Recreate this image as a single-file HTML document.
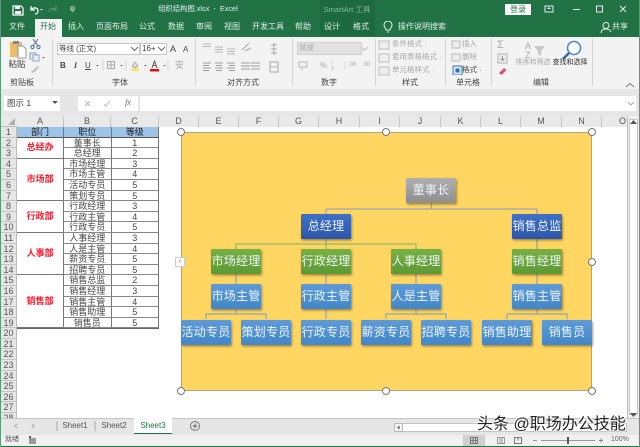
<!DOCTYPE html>
<html lang="zh"><head><meta charset="utf-8"><title>Excel</title>
<style>
html,body{margin:0;padding:0;background:#fff}
#p{position:relative;width:640px;height:447px;overflow:hidden;background:#fff;font-family:"Liberation Sans","Noto Sans CJK SC",sans-serif;font-size:8px;color:#444;filter:blur(.35px)}
#p div,#p span,#p svg{position:absolute}
.t{white-space:nowrap;line-height:10px;transform:translateX(-50%)}
.l{white-space:nowrap;line-height:10px}
.g{color:#a8a8a8}
.w{color:#e4eee8}
.sep{width:1px;background:#d4d4d4;top:39px;height:47px}
.bx{background:#fff;border:1px solid #c8c8c8;box-sizing:border-box}
.ch{top:116px;height:11px;line-height:11px;text-align:center;color:#555;font-size:9px;border-right:1px solid #c4c4c4;box-sizing:border-box;background:#e9e9e9}
#rh{left:1px;top:127px;width:16px;display:grid;grid-template-rows:repeat(28,10.6px);background:#e6e6e6}
#rh i{font-style:normal;text-align:center;font-size:9px;line-height:11px;color:#555;border-bottom:1px solid #c4c4c4;border-right:1px solid #bbb;box-sizing:border-box;overflow:hidden}
#tb{left:17px;top:127px;width:142px;display:grid;grid-template-columns:47px 47.5px 47.5px;grid-template-rows:repeat(19,10.6px);border-bottom:1px solid #666;border-right:1px solid #666;box-sizing:border-box}
#tb b{font-weight:normal;font-size:9px;line-height:11px;text-align:center;color:#444;border-bottom:1px solid #888;border-right:1px solid #777;box-sizing:border-box;overflow:hidden;white-space:nowrap}
#tb b.h{background:#9dc3e6;color:#1a1a1a;border-bottom:1px solid #555}
#tb b.m{color:#ff1a2e;font-weight:bold;display:flex;align-items:center;justify-content:center;border-bottom:1px solid #777}
.n{width:50px;height:25px;line-height:24px;text-align:center;color:#eef4fa;font-size:12px;letter-spacing:.2px;box-shadow:1px 1.5px 2px rgba(70,60,30,.5);border-radius:1px;white-space:nowrap}
.c{background:linear-gradient(#5e9ad8,#4287c9)}
.gr{background:linear-gradient(#78b043,#5c9a35)}
.d{background:linear-gradient(#3f70c8,#2c56ab)}
.s{background:linear-gradient(#b0b0b0,#8e8e8e)}
.hd{border:1px solid #777;border-radius:50%;background:#fff;box-sizing:border-box;width:8px;height:8px}
</style></head><body><div id="p">

<!-- title + tab bar -->
<div style="left:0;top:0;width:640px;height:37px;background:#217346"></div>
<div style="left:320px;top:0;width:55px;height:36px;background:#1d6a40"></div>
<svg style="left:0;top:0" width="90" height="18" viewBox="0 0 90 18"><path d="M13 6h8l2 2v7h-10z" fill="none" stroke="#fff" stroke-width="1.2"/><rect x="15" y="6" width="5" height="3" fill="#fff"/><rect x="15" y="11" width="6" height="3" fill="#fff"/><path d="M31 6v4h4M31 10c2-3 7-3 7 1 0 2-1 3-3 3" fill="none" stroke="#fff" stroke-width="1.2"/><path d="M40 9l3 0-1.500 1.500z" fill="#fff"/><path d="M56 6v4h-4M56 10c-2-3-6-2-7 2" fill="none" stroke="#5f9a7a" stroke-width="1"/><path d="M70 7h5M70.500 9h4l-2 2.500z" fill="none" stroke="#b9d2c4" stroke-width="1"/></svg>
<span class="t w" style="left:198px;top:4px;font-size:7.300px">组织结构图.xlsx &nbsp;-&nbsp; Excel</span>
<span class="t" style="left:347px;top:5px;font-size:7.500px;color:#8db9a1">SmartArt 工具</span>
<div style="left:505px;top:4px;width:26px;height:11px;background:#fff;color:#217346;text-align:center;line-height:11px">登录</div>
<svg style="left:540px;top:0" width="100" height="18" viewBox="0 0 100 18"><rect x="5" y="6" width="8" height="6" fill="none" stroke="#e4eee8"/><path d="M7 9l2-2 2 2z" fill="#e4eee8"/><path d="M33 9.500h7" stroke="#e4eee8"/><rect x="56.500" y="6" width="6" height="6" fill="none" stroke="#e4eee8"/><path d="M80 6l6 6M86 6l-6 6" stroke="#e4eee8"/></svg>
<div style="left:35px;top:19px;width:27px;height:18px;background:#f3f3f3"></div>
<span class="t w" style="left:17px;top:22px">文件</span>
<span class="t" style="left:48px;top:22px;color:#217346">开始</span>
<span class="t w" style="left:76px;top:22px">插入</span>
<span class="t w" style="left:112px;top:22px">页面布局</span>
<span class="t w" style="left:147px;top:22px">公式</span>
<span class="t w" style="left:176px;top:22px">数据</span>
<span class="t w" style="left:204px;top:22px">审阅</span>
<span class="t w" style="left:232px;top:22px">视图</span>
<span class="t w" style="left:268px;top:22px">开发工具</span>
<span class="t w" style="left:303px;top:22px">帮助</span>
<span class="t w" style="left:332px;top:22px">设计</span>
<span class="t w" style="left:361px;top:22px">格式</span>
<svg style="left:382px;top:21px" width="12" height="13" viewBox="0 0 12 13"><path d="M4 9c0-2-2-2.500-2-5a4 4 0 0 1 8 0c0 2.500-2 3-2 5zM5 11h2" fill="none" stroke="#e4eee8"/></svg>
<span class="l w" style="left:398px;top:22px">操作说明搜索</span>
<svg style="left:600px;top:21px" width="12" height="13" viewBox="0 0 12 13"><circle cx="6" cy="4.500" r="3" fill="none" stroke="#e4eee8"/><path d="M1 12c0-3 2-4 5-4s4 1 5 3" fill="none" stroke="#e4eee8"/></svg>
<span class="l w" style="left:612px;top:22px">共享</span>

<!-- ribbon -->
<div style="left:1px;top:37px;width:638px;height:52px;background:#f3f3f3;border-bottom:1px solid #d8d8d8"></div>
<div class="sep" style="left:52px"></div><div class="sep" style="left:195px"></div><div class="sep" style="left:292px"></div><div class="sep" style="left:375px"></div><div class="sep" style="left:445px"></div><div class="sep" style="left:491px"></div><div class="sep" style="left:592px"></div>

<svg style="left:0;top:36px" width="52" height="40" viewBox="0 0 52 40"><rect x="10" y="6" width="12" height="15" fill="#e8bd6b"/><rect x="13" y="5" width="6" height="3" fill="#888"/><path d="M18 10h5l3 3v9h-8z" fill="#fff" stroke="#777" stroke-width=".7"/><path d="M33 3l5 7M38 3l-5 7" stroke="#4a6f93"/><circle cx="32.500" cy="11" r="1.600" fill="none" stroke="#4a6f93"/><circle cx="38.500" cy="11" r="1.600" fill="none" stroke="#4a6f93"/><rect x="30" y="17" width="6" height="6" fill="#e4eaf0" stroke="#8ba6bf"/><rect x="33" y="19" width="6" height="6" fill="#eef" stroke="#8ba6bf"/><path d="M42 21l3 0-1.500 1.500z" fill="#666"/><path d="M31 36l3-3 4-3 1 1-3 4-3 2z" fill="#c4c4c4"/></svg>
<span class="t" style="left:17px;top:59px;font-size:8.500px">粘贴</span>
<span class="t" style="left:22px;top:78px">剪贴板</span>

<div class="bx" style="left:57px;top:43px;width:83px;height:12px"></div>
<span class="l" style="left:59px;top:44px;font-size:7.500px">等线 (正文)</span>
<svg style="left:130px;top:46px" width="9" height="6"><path d="M1 1l3.500 3.500L8 1" fill="none" stroke="#666"/></svg>
<div class="bx" style="left:140px;top:43px;width:27px;height:12px"></div>
<span class="l" style="left:142px;top:44px;font-size:8px">16+</span>
<svg style="left:157px;top:46px" width="9" height="6"><path d="M1 1l3.500 3.500L8 1" fill="none" stroke="#666"/></svg>
<span class="l" style="left:170px;top:44px;font-size:9px">A</span><span class="l" style="left:183px;top:45px;font-size:8px">A</span>
<span class="l" style="left:60px;top:61px;font-weight:bold">B</span><span class="l" style="left:74px;top:61px;font-style:italic;font-family:'Liberation Serif',serif;font-weight:bold">I</span><span class="l" style="left:85px;top:61px;text-decoration:underline">U</span>
<svg style="left:95px;top:60px" width="100" height="12" viewBox="0 0 100 12"><path d="M1 5l3 0-1.500 1.500z" fill="#777"/><path d="M8 0v11" stroke="#d4d4d4"/><rect x="12.500" y="1.500" width="7" height="7" fill="none" stroke="#aaa"/><path d="M16 1.500v7M12.500 5h7" stroke="#aaa"/><path d="M25 5l3 0-1.500 1.500z" fill="#777"/><path d="M31 0v11" stroke="#d4d4d4"/><rect x="36" y="8.500" width="8" height="2.500" fill="#ffe45c"/><path d="M37 6l3-4 3 4-3 2z" fill="#dcdcdc" stroke="#8a8a8a" stroke-width=".6"/><path d="M49 5l3 0-1.500 1.500z" fill="#777"/><rect x="55" y="9" width="9" height="2.500" fill="#e01010"/><path d="M57 8l2.500-7 2.500 7M58 5.500h3" fill="none" stroke="#555"/><path d="M68 5l3 0-1.500 1.500z" fill="#777"/><path d="M73 0v11" stroke="#d4d4d4"/></svg>
<span class="l g" style="left:175px;top:60px;font-size:9px">安</span>
<span class="t" style="left:120px;top:78px">字体</span>

<svg style="left:196px;top:40px" width="96" height="36" viewBox="0 0 96 36" stroke="#b4b4b4" fill="none"><path d="M7 4h8M7 6.500h8M19 7h8M19 9.500h8M19 12h8M31 9h8M31 11.500h8M31 14h8"/><path d="M46 10l7-7M49 11l6-3" stroke="#aaa"/><path d="M75 5h6M75 9h6M75 13h6M78 3v12" stroke="#aaa"/><path d="M7 23h8M7 25.500h6M7 28h8M7 30.500h6M19 23h8M20 25.500h6M19 28h8M20 30.500h6M31 23h8M33 25.500h6M31 28h8M33 30.500h6M45 23h9M45 26h9M45 29h9M55 23h9M55 26h9M55 29h9" stroke="#9c9c9c"/><rect x="74" y="22" width="8" height="10" stroke="#a6a6a6"/><path d="M74 27h8"/></svg>
<span class="t" style="left:243px;top:78px">对齐方式</span>

<div style="left:297px;top:42px;width:65px;height:13px;background:#e2e2e2;border:1px solid #d0d0d0;box-sizing:border-box"></div>
<span class="l g" style="left:299px;top:43px;font-size:7.500px">常规</span>
<svg style="left:360px;top:46px" width="9" height="6"><path d="M1 1l3.500 3.500L8 1" fill="none" stroke="#bbb"/></svg>
<svg style="left:298px;top:60px" width="72" height="12" viewBox="0 0 72 12" fill="none" stroke="#b4b4b4"><rect x="1" y="2" width="8" height="5"/><path d="M4 8v3"/><path d="M34 0v11M47 2v7" stroke="#d4d4d4"/></svg>
<span class="l g" style="left:320px;top:61px">%</span><span class="l g" style="left:332px;top:60px;font-size:9px">,</span><span class="l g" style="left:348px;top:60px;font-size:6px">.00</span><span class="l g" style="left:362px;top:60px;font-size:6px">.00</span>
<span class="t" style="left:329px;top:78px">数字</span>

<svg style="left:378px;top:40px" width="14" height="36" viewBox="0 0 14 36" fill="#eee" stroke="#bcbcbc"><rect x="1" y="1" width="10" height="8"/><rect x="1" y="14" width="10" height="8"/><rect x="1" y="27" width="10" height="8"/></svg>
<span class="l g" style="left:392px;top:39px;font-size:7.500px">条件格式 ·</span>
<span class="l g" style="left:392px;top:52px;font-size:7.500px">套用表格格式 ·</span>
<span class="l g" style="left:392px;top:65px;font-size:7.500px">单元格样式 ·</span>
<span class="t" style="left:410px;top:78px">样式</span>

<svg style="left:450px;top:39px" width="22" height="36" viewBox="0 0 22 36"><rect x="2" y="2" width="8" height="7" fill="#eee" stroke="#bbb"/><rect x="2" y="15" width="8" height="7" fill="#eee" stroke="#bbb"/><rect x="3" y="27" width="9" height="9" fill="#dbe9f7" stroke="#3f75ad"/><rect x="5.500" y="29.500" width="4" height="4" fill="#2f6fb3"/></svg>
<span class="l g" style="left:462px;top:39px;font-size:7.500px">插入</span><span class="l g" style="left:462px;top:52px;font-size:7.500px">删除</span><span class="l" style="left:462px;top:65px;font-size:7.500px">格式 ·</span>
<span class="t" style="left:468px;top:78px">单元格</span>

<span class="l g" style="left:497px;top:40px;font-size:11px">Σ</span>
<svg style="left:496px;top:52px" width="22" height="24" viewBox="0 0 22 24"><rect x="2" y="2" width="9" height="9" fill="#eee" stroke="#b0b0b0"/><path d="M6.500 4v4M4.500 6.500l2 2 2-2" fill="none" stroke="#999"/><path d="M3 21l5-5 2.500 2-5 5z" fill="#e05070"/></svg>
<span class="l g" style="left:525px;top:42px;font-size:9px;line-height:9px">A<br>Z</span>
<svg style="left:533px;top:45px" width="14" height="12"><path d="M1 1h11L8 6v5L5 9V6z" fill="#c8c8c8"/></svg>
<span class="t g" style="left:533px;top:58px;font-size:7px">排序和筛选</span>
<svg style="left:559px;top:39px" width="26" height="22" viewBox="0 0 26 22"><circle cx="15" cy="9" r="6.500" fill="#fff" stroke="#4d88c8" stroke-width="1.600"/><path d="M10 14l-6 6" stroke="#2e6cad" stroke-width="2.600"/></svg>
<span class="t" style="left:570px;top:58px;font-size:7px;color:#333">查找和选择</span>
<span class="t" style="left:541px;top:78px">编辑</span>
<svg style="left:625px;top:82px" width="10" height="6"><path d="M1 5l4-3.500L9 5" fill="none" stroke="#777"/></svg>

<!-- formula bar -->
<div style="left:1px;top:89px;width:638px;height:27px;background:#e6e6e6"></div>
<div class="bx" style="left:4px;top:96px;width:56px;height:15px;border:0"></div>
<span class="l" style="left:7px;top:98px;font-size:8.500px">图示 1</span>
<svg style="left:52px;top:101px" width="6" height="4"><path d="M0 0h6L3 3z" fill="#555"/></svg>
<div class="bx" style="left:78px;top:96px;width:60px;height:15px;border:0"></div>
<svg style="left:82px;top:98px" width="50" height="11" viewBox="0 0 50 11" fill="none" stroke="#bbb"><path d="M3 3l5 5M8 3l-5 5M22 6l2 2 4-5"/></svg>
<span class="l" style="left:125px;top:98px;font-style:italic;font-family:'Liberation Serif',serif;color:#666">fx</span>
<div class="bx" style="left:140px;top:96px;width:496px;height:15px;border:0"></div>
<svg style="left:628px;top:102px" width="7" height="4"><path d="M0 0l3 3 3-3" fill="none" stroke="#aaa"/></svg>

<!-- column heads -->
<div style="left:1px;top:116px;width:627px;height:11px;background:#e9e9e9;border-bottom:1px solid #bbb;box-sizing:border-box"></div>
<svg style="left:8px;top:118px" width="8" height="8"><path d="M7 0v7H0z" fill="#b0b0b0"/></svg>
<div class="ch" style="left:17px;width:47px">A</div><div class="ch" style="left:64px;width:47px">B</div><div class="ch" style="left:111px;width:48px">C</div><div class="ch" style="left:159px;width:40px">D</div>
<div class="ch" style="left:199px;width:40px">E</div><div class="ch" style="left:239px;width:40px">F</div><div class="ch" style="left:279px;width:40px">G</div><div class="ch" style="left:319px;width:41px">H</div><div class="ch" style="left:360px;width:40px">I</div><div class="ch" style="left:400px;width:41px">J</div><div class="ch" style="left:441px;width:40px">K</div><div class="ch" style="left:481px;width:40px">L</div><div class="ch" style="left:521px;width:41px">M</div><div class="ch" style="left:562px;width:40px">N</div><div class="ch" style="left:602px;width:26px;text-align:right;padding-right:2px;border-right:0">O</div>

<!-- row heads -->
<div id="rh"><i>1</i><i>2</i><i>3</i><i>4</i><i>5</i><i>6</i><i>7</i><i>8</i><i>9</i><i>10</i><i>11</i><i>12</i><i>13</i><i>14</i><i>15</i><i>16</i><i>17</i><i>18</i><i>19</i><i>20</i><i>21</i><i>22</i><i>23</i><i>24</i><i>25</i><i>26</i><i>27</i><i>28</i></div>

<!-- table -->
<div id="tb">
<b class="h">部门</b><b class="h">职位</b><b class="h">等级</b>
<b class="m" style="grid-row:span 2">总经办</b><b>董事长</b><b>1</b><b>总经理</b><b>2</b>
<b class="m" style="grid-row:span 4">市场部</b><b>市场经理</b><b>3</b><b>市场主管</b><b>4</b><b>活动专员</b><b>5</b><b>策划专员</b><b>5</b>
<b class="m" style="grid-row:span 3">行政部</b><b>行政经理</b><b>3</b><b>行政主管</b><b>4</b><b>行政专员</b><b>5</b>
<b class="m" style="grid-row:span 4">人事部</b><b>人事经理</b><b>3</b><b>人是主管</b><b>4</b><b>薪资专员</b><b>5</b><b>招聘专员</b><b>5</b>
<b class="m" style="grid-row:span 5">销售部</b><b>销售总监</b><b>2</b><b>销售经理</b><b>3</b><b>销售主管</b><b>4</b><b>销售助理</b><b>5</b><b>销售员</b><b>5</b>
</div>

<!-- SmartArt -->
<div style="left:181px;top:132px;width:411px;height:259px;background:#ffd662;border:1px solid #a9a48c;box-sizing:border-box"></div>
<svg style="left:180px;top:170px" width="420" height="180" viewBox="180 170 420 180" fill="none" stroke-width="1.200">
<path d="M431.500 203v6M326 209h211M326 209v5M537 209v5" stroke="#96a6b4"/>
<path d="M236 249v-5h180v5M326 239v10" stroke="#96b56a"/>
<path d="M537 239v10" stroke="#8aa08a"/>
<path d="M236 274v10M326 274v10M416 274v10M537 274v10" stroke="#8fa3ae"/>
<path d="M236 309v5M206 319v-5h60v5M326 309v10M416 309v5M386 319v-5h60v5M537 309v5M507 319v-5h60v5" stroke="#8fa3ae"/>
</svg>
<div class="n s" style="left:406px;top:178px">董事长</div>
<div class="n d" style="left:301px;top:214px">总经理</div>
<div class="n d" style="left:512px;top:214px">销售总监</div>
<div class="n gr" style="left:211px;top:249px">市场经理</div>
<div class="n gr" style="left:301px;top:249px">行政经理</div>
<div class="n gr" style="left:391px;top:249px">人事经理</div>
<div class="n gr" style="left:512px;top:249px">销售经理</div>
<div class="n c" style="left:211px;top:284px">市场主管</div>
<div class="n c" style="left:301px;top:284px">行政主管</div>
<div class="n c" style="left:391px;top:284px">人是主管</div>
<div class="n c" style="left:512px;top:284px">销售主管</div>
<div class="n c" style="left:181px;top:320px">活动专员</div>
<div class="n c" style="left:241px;top:320px">策划专员</div>
<div class="n c" style="left:301px;top:320px">行政专员</div>
<div class="n c" style="left:361px;top:320px">薪资专员</div>
<div class="n c" style="left:421px;top:320px">招聘专员</div>
<div class="n c" style="left:482px;top:320px">销售助理</div>
<div class="n c" style="left:542px;top:320px">销售员</div>
<div class="hd" style="left:177px;top:128px"></div><div class="hd" style="left:382px;top:128px"></div><div class="hd" style="left:588px;top:128px"></div>
<div class="hd" style="left:588px;top:258px"></div>
<div class="hd" style="left:177px;top:387px"></div><div class="hd" style="left:382px;top:387px"></div><div class="hd" style="left:588px;top:387px"></div>
<div style="left:175px;top:257px;width:10px;height:10px;background:#fff;border:1px solid #ccc;box-sizing:border-box;font-size:7px;line-height:8px;text-align:center;color:#555">‹</div>

<!-- scrollbar -->
<div style="left:627px;top:116px;width:12px;height:302px;background:#f0f0f0;border-left:1px solid #bbb;box-sizing:border-box"></div>
<div style="left:629px;top:119px;width:9px;height:296px;background:#fff;border:1px solid #c4c4c4;box-sizing:border-box"></div>
<svg style="left:630px;top:120px" width="7" height="5"><path d="M3.500 0L7 4H0z" fill="#555"/></svg>
<svg style="left:630px;top:413px" width="7" height="5"><path d="M3.500 4L7 0H0z" fill="#555"/></svg>

<!-- sheet tabs -->
<div style="left:1px;top:418px;width:638px;height:17px;background:#e6e6e6;border-top:1px solid #c4c4c4;box-sizing:border-box"></div>
<div style="left:134px;top:418px;width:38px;height:15px;background:#fff;border-bottom:1px solid #217346"></div>
<span class="t" style="left:75px;top:421px;font-size:8px;color:#555">Sheet1</span>
<span class="t" style="left:114px;top:421px;font-size:8px;color:#555">Sheet2</span>
<span class="t" style="left:153px;top:421px;font-size:8px;color:#217346">Sheet3</span>
<svg style="left:0;top:419px" width="210" height="15" viewBox="0 0 210 15"><path d="M57 2v10M95 2v10" stroke="#aaa"/><circle cx="195" cy="7" r="4.500" fill="none" stroke="#777"/><path d="M195 4.500v5M192.500 7h5" stroke="#666"/><path d="M17 5l-2 2 2 2M32 5l2 2-2 2" stroke="#aaa" fill="none"/></svg>
<div style="left:394px;top:423px;width:233px;height:9px;background:#fff;border:1px solid #c4c4c4;box-sizing:border-box"></div>
<svg style="left:394px;top:423px" width="10" height="9"><rect x=".5" y=".5" width="8" height="8" fill="#f4f4f4" stroke="#bbb"/><path d="M5.500 2.500v4L3 4.500z" fill="#555"/></svg>

<!-- status bar -->
<div style="left:1px;top:435px;width:638px;height:11px;background:#f1f1f1"></div>
<div style="left:0;top:446px;width:640px;height:1px;background:#217346"></div>
<div style="left:0;top:0;width:1px;height:447px;background:#5b9a78"></div>
<div style="left:639px;top:0;width:1px;height:447px;background:#5b9a78"></div>
<span class="l" style="left:5px;top:435px;font-size:7px;color:#555">就绪</span>
<svg style="left:28px;top:435px" width="10" height="10"><rect x="1" y="3" width="7" height="6" fill="#999"/><rect x="1" y="1" width="2" height="2" fill="#555"/></svg>
<div style="left:463px;top:435px;width:22px;height:11px;background:#cfcfcf"></div>
<svg style="left:465px;top:435px" width="175" height="11" viewBox="0 0 175 11" fill="none" stroke="#777"><rect x="5.500" y="2.500" width="7" height="6"/><path d="M8 2.500v6M10.500 2.500v6M5.500 5.500h7"/><rect x="32.500" y="2.500" width="7" height="6" stroke="#999"/><path d="M35 2.500v6M37 2.500v6" stroke="#999"/><rect x="49.500" y="2.500" width="7" height="6"/><path d="M53 2.500v3"/><path d="M68 5.500h4M76 5.500h54" stroke="#999"/><path d="M134 5.500h4M136 3.500v4" stroke="#888"/><rect x="102" y="2" width="2" height="7" fill="#555" stroke="none"/></svg>
<span class="l" style="left:611px;top:435px;font-size:7px;color:#666">100%</span>

<!-- watermark -->
<span class="l" style="left:477px;top:415px;font-size:16px;line-height:20px;color:#222;text-shadow:0 0 2px #fff,0 0 2px #fff,0 0 2px #fff">头条 @职场办公技能</span>
</div></body></html>
